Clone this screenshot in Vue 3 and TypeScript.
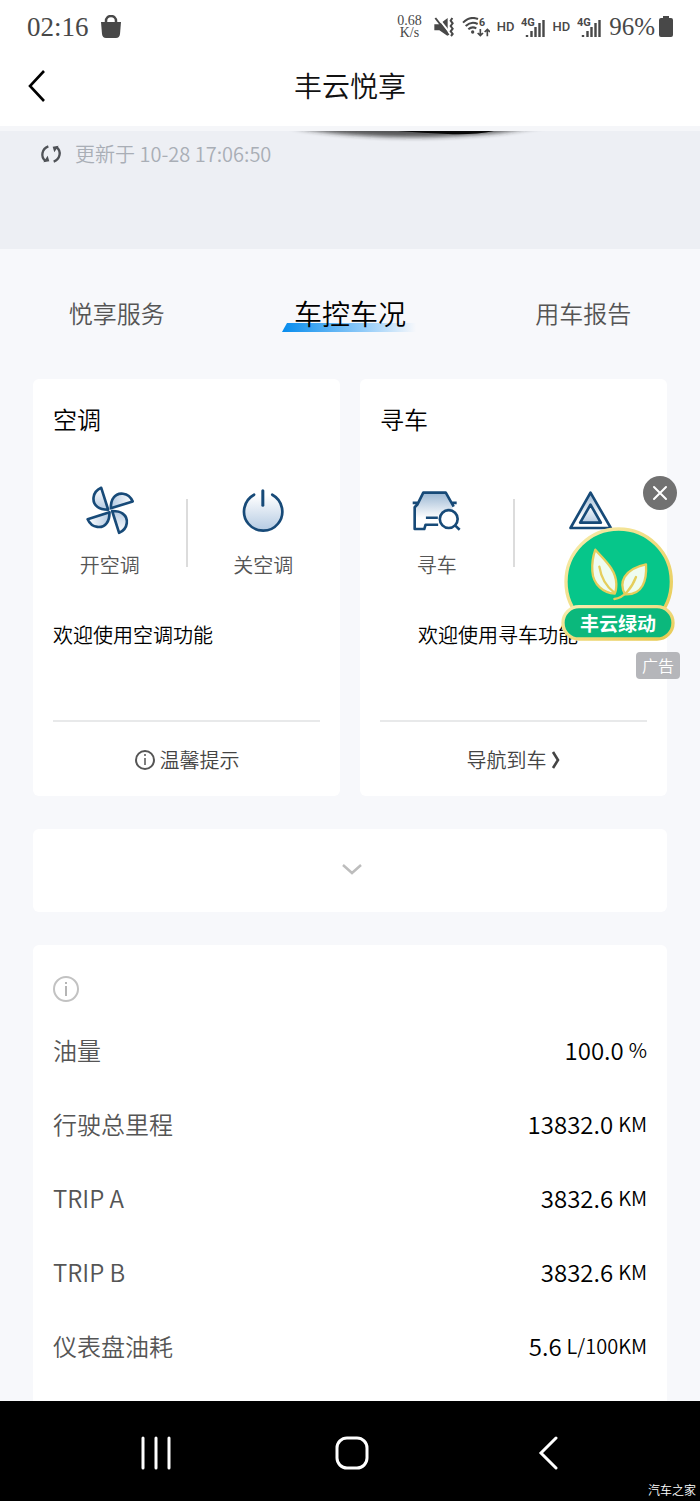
<script setup lang="ts">
import { ref } from 'vue'

interface Reading {
  label: string
  value: string
  unit: string
}

const tabs: string[] = ['悦享服务', '车控车况', '用车报告']
const activeTab = ref<number>(1)
const promoVisible = ref<boolean>(true)

const readings: Reading[] = [
  { label: '油量', value: '100.0', unit: '%' },
  { label: '行驶总里程', value: '13832.0', unit: 'KM' },
  { label: 'TRIP A', value: '3832.6', unit: 'KM' },
  { label: 'TRIP B', value: '3832.6', unit: 'KM' },
  { label: '仪表盘油耗', value: '5.6', unit: 'L/100KM' },
]
const blades: number[] = [0, 90, 180, 270]
</script>

<template>
  <div class="page">
    <div class="status">
      <span class="clock">02:16</span>
      <svg class="bag" width="22" height="24" viewBox="0 0 22 24">
        <path d="M6 9V6a5 5 0 0 1 10 0v3" fill="none" stroke="#484848" stroke-width="2.500" />
        <path d="M1 7h20l-1 12q-.5 4-4 4H6q-3.500 0-4-4z" fill="#484848" />
      </svg>
      <div class="indicators">
        <span class="speed">0.68<br />K/s</span>
        <svg width="20" height="20" viewBox="0 0 60 60">
          <path d="M1 22h15L41 3v54L16 40H1z" fill="#484848" />
          <path d="M10 0l44 56" stroke="#fff" stroke-width="6" />
          <path d="M4 3l40 51" stroke="#484848" stroke-width="6" />
          <path d="M55 3l-5 8 6 8-6 8 6 8-6 8 6 8-5 6" fill="none" stroke="#484848" stroke-width="6" />
        </svg>
        <svg width="28" height="21" viewBox="0 0 84 63">
          <g fill="none" stroke="#484848" stroke-width="6">
            <path d="M3 17Q24-4 48 6" />
            <path d="M11 27Q28 11 47 21" />
            <path d="M19 37Q30 27 43 34" />
            <path d="M55 36v20M47 48l8 8 8-8M76 58V37M68 45l8-8 8 8" stroke-width="5" />
          </g>
          <circle cx="32" cy="45" r="5" fill="#484848" />
          <text x="51" y="27" class="wifi-mark">6</text>
        </svg>
        <template v-for="n in 2" :key="n">
          <span class="hd">HD</span>
          <svg width="24" height="22" viewBox="0 0 24 22">
            <text x="0" y="10" class="net-mark">4G</text>
            <path d="M6 19v2M10.500 15v6M14.500 11v10M18.500 7v14M22.500 4v17" stroke="#484848" stroke-width="2.400" />
          </svg>
        </template>
        <span class="charge">96%</span>
        <svg width="14" height="22" viewBox="0 0 14 22">
          <path d="M4 0h6v2h2q2 0 2 2v15q0 2-2 2H2q-2 0-2-2V4q0-2 2-2h2z" fill="#484848" />
        </svg>
      </div>
    </div>

    <header class="header">
      <button class="back" type="button" aria-label="返回">
        <svg width="20" height="34" viewBox="0 0 20 34">
          <path d="M17 2L3 17l14 15" fill="none" stroke="#000" stroke-width="2.600" />
        </svg>
      </button>
      <h1>丰云悦享</h1>
    </header>

    <section class="hero">
      <svg class="car-shadow" width="320" height="24" viewBox="0 0 320 24">
        <defs>
          <filter id="soft" x="-20%" y="-100%" width="140%" height="300%"><feGaussianBlur stdDeviation="7 2" /></filter>
        </defs>
        <path d="M28-8H290L225 2Q120 12 28-2z" fill="#222" filter="url(#soft)" opacity=".75" />
        <path d="M125 0h96q-20 4-46 3-25-1-50-3z" fill="#080808" />
      </svg>
      <button class="update" type="button">
        <svg width="22" height="22" viewBox="0 0 66 66">
          <g fill="none" stroke="#4f5257" stroke-width="7">
            <path d="M25 10C6 17 0 41 17 54" />
            <path d="M41 56C60 49 66 25 49 12" />
          </g>
          <path d="M10 58l18-3-5-17zM56 8l-18 3 5 17z" fill="#4f5257" />
        </svg>
        <span>更新于 10-28 17:06:50</span>
      </button>
    </section>

    <nav class="tabs">
      <button
        v-for="(tab, i) in tabs"
        :key="tab"
        type="button"
        class="tab"
        :class="{ active: i === activeTab }"
        @click="activeTab = i"
      >
        <span>{{ tab }}</span>
      </button>
    </nav>

    <main class="content">
      <svg class="defs" width="0" height="0" aria-hidden="true">
        <defs>
          <linearGradient id="down" x1="0" y1="0" x2="0" y2="1">
            <stop offset="0" stop-color="#fff" />
            <stop offset="1" stop-color="#b4cae2" />
          </linearGradient>
          <linearGradient id="up" x1="0" y1="0" x2="0" y2="1">
            <stop offset="0" stop-color="#9bb7d3" />
            <stop offset=".7" stop-color="#fff" />
          </linearGradient>
        </defs>
      </svg>
      <div class="cards">
        <section class="card">
          <h2>空调</h2>
          <div class="actions">
            <button type="button" class="action">
              <svg width="48" height="49" viewBox="105 48 145 147">
                <path
                  v-for="deg in blades"
                  :key="deg"
                  d="M151 53C122 66 122 98 140 111Q150 119 172 119Z"
                  :transform="`rotate(${deg} 178 121)`"
                  fill="url(#down)"
                  stroke="#174a78"
                  stroke-width="8"
                  stroke-linejoin="round"
                />
              </svg>
              <span>开空调</span>
            </button>
            <button type="button" class="action">
              <svg width="43" height="45" viewBox="578 56 128 134">
                <path d="M614 76A57 57 0 1 0 668 76" fill="url(#down)" stroke="#174a78" stroke-width="8" stroke-linecap="round" />
                <path d="M640 64v43" stroke="#174a78" stroke-width="9" stroke-linecap="round" />
              </svg>
              <span>关空调</span>
            </button>
          </div>
          <p class="note">欢迎使用空调功能</p>
          <button type="button" class="foot">
            <svg width="22" height="22" viewBox="0 0 22 22">
              <circle cx="11" cy="11" r="9" fill="none" stroke="#555" stroke-width="2" />
              <path d="M11 9v7M11 5v2" stroke="#555" stroke-width="1.500" />
            </svg>
            <span class="tip">温馨提示</span>
          </button>
        </section>

        <section class="card">
          <h2>寻车</h2>
          <div class="actions">
            <button type="button" class="action">
              <svg width="49" height="41" viewBox="96 60 148 124">
                <path d="M112 104L130 68H198L218 104V140L180 165H137L133 178H104V112Z" fill="url(#up)" />
                <g fill="none" stroke="#174a78" stroke-width="8" stroke-linejoin="round">
                  <path d="M98 99H114M216 99H231M222 110L198 68H130L112 104L104 112V178H133L137 165H175M138 144H174" />
                  <circle cx="207" cy="148" r="27" fill="#fff" />
                  <path d="M226 167l14 13" />
                </g>
              </svg>
              <span>寻车</span>
            </button>
            <button type="button" class="action" aria-label="闪灯">
              <svg width="45" height="40" viewBox="566 54 134 120">
                <g fill="url(#up)" stroke="#174a78" stroke-width="8" stroke-linejoin="round">
                  <path d="M633 62L573 168H694Z" />
                  <path d="M633 98L602 152H664Z" fill="url(#down)" />
                </g>
              </svg>
            </button>
          </div>
          <p class="note inset">欢迎使用寻车功能</p>
          <button type="button" class="foot">
            <span>导航到车</span>
            <svg width="10" height="20" viewBox="0 0 10 20">
              <path d="M2 2q5 8 5 8t-5 8" fill="none" stroke="#444" stroke-width="2.600" />
            </svg>
          </button>
        </section>
      </div>

      <button type="button" class="expander" aria-label="展开">
        <svg width="20" height="12" viewBox="0 0 20 12">
          <path d="M1 2l9 8 9-8" fill="none" stroke="#bdbdbd" stroke-width="2.500" />
        </svg>
      </button>

      <section class="details">
        <svg class="info" width="26" height="26" viewBox="0 0 26 26">
          <circle cx="13" cy="13" r="12" fill="none" stroke="#c2c2c2" stroke-width="2" />
          <path d="M13 10v10M13 6v2" stroke="#b5b5b5" stroke-width="2" />
        </svg>
        <dl>
          <div v-for="r in readings" :key="r.label" class="reading">
            <dt>{{ r.label }}</dt>
            <dd>
              <span class="value">{{ r.value }}</span>
              <span class="unit">{{ r.unit }}</span>
            </dd>
          </div>
        </dl>
      </section>
    </main>

    <nav class="system">
      <button type="button" aria-label="最近任务">
        <svg width="34" height="34" viewBox="0 0 34 34">
          <path d="M4 2v30M17 2v30M30 2v30" stroke="#fff" stroke-width="3" stroke-linecap="round" />
        </svg>
      </button>
      <button type="button" aria-label="主页">
        <svg width="34" height="34" viewBox="0 0 34 34">
          <rect x="2" y="2" width="30" height="30" rx="10" fill="none" stroke="#fff" stroke-width="3" />
        </svg>
      </button>
      <button type="button" aria-label="后退">
        <svg width="20" height="34" viewBox="0 0 20 34">
          <path d="M18 2L3 17l15 15" fill="none" stroke="#fff" stroke-width="3" stroke-linecap="round" />
        </svg>
      </button>
      <span class="watermark">汽车之家</span>
    </nav>

    <aside v-if="promoVisible" class="promo">
      <button type="button" class="close" aria-label="关闭" @click="promoVisible = false">
        <svg width="16" height="16" viewBox="0 0 16 16">
          <path d="M2 2l12 12M14 2L2 14" stroke="#fff" stroke-width="2" stroke-linecap="round" />
        </svg>
      </button>
      <a href="#" class="badge">
        <svg width="114" height="114" viewBox="545 171 342 342">
          <defs>
            <linearGradient id="gold" x1="0" y1="0" x2="1" y2="1">
              <stop offset="0" stop-color="#f8edb0" />
              <stop offset="1" stop-color="#e6c94f" />
            </linearGradient>
          </defs>
          <circle cx="718" cy="335" r="158" fill="#06c68a" stroke="url(#gold)" stroke-width="10" />
          <rect x="551" y="410" width="330" height="97" rx="48" fill="#0bb87c" stroke="url(#gold)" stroke-width="10" />
          <g fill="#effcf0" stroke="#e5ce5c" stroke-width="7" stroke-linejoin="round" stroke-linecap="round">
            <path d="M648 239C670 266 710 296 711 342Q711 362 706 371C674 369 641 345 639 303C637 272 643 253 648 239Z" />
            <path d="M800 283C803 331 790 376 737 373C718 340 732 297 800 283Z" />
            <path d="M660 290Q668 340 705 368M705 387C735 384 758 352 770 321" fill="none" />
          </g>
        </svg>
        <span class="badge-text">丰云绿动</span>
      </a>
      <span class="ad">广告</span>
    </aside>
  </div>
</template>

<style>
body {
  margin: 0;
  background: #f7f8fb;
}
</style>

<style scoped>
.page {
  position: relative;
  font-family: "Noto Sans CJK SC", sans-serif;
  font-weight: 350;
  color: #111;
  background: #f7f8fb;
}
button {
  padding: 0;
  border: 0;
  background: none;
  font: inherit;
  color: inherit;
  cursor: pointer;
}
svg {
  display: block;
  flex: none;
}
h1, h2, p, dl, dd {
  margin: 0;
  font-weight: inherit;
}
.status {
  display: flex;
  align-items: center;
  height: 54px;
  padding: 0 27px;
  background: #fff;
  color: #484848;
  font-family: "Liberation Serif", serif;
}
.clock {
  font-size: 27px;
  line-height: 32px;
}
.bag {
  margin-left: 11px;
}
.indicators {
  display: flex;
  align-items: center;
  gap: 8px;
  margin-left: auto;
}
.speed {
  margin-right: 4px;
  font-size: 14px;
  line-height: 12px;
  text-align: center;
}
.hd {
  margin: 0 -1px;
  font: 500 13px/20px Roboto, sans-serif;
}
.net-mark, .wifi-mark {
  fill: #484848;
  font: 700 11px Roboto, sans-serif;
}
.wifi-mark {
  font-size: 32px;
}
.charge {
  font-size: 25px;
  line-height: 32px;
  margin-right: -4px;
}
.header {
  display: grid;
  grid-template-columns: 72px 1fr 72px;
  align-items: center;
  height: 72px;
  background: #fff;
}
.back {
  justify-self: start;
  margin-left: 27px;
  margin-bottom: 8px;
}
.header h1 {
  padding-bottom: 10px;
  text-align: center;
  font-size: 28px;
  line-height: 40px;
}
.hero {
  position: relative;
  height: 118px;
  border-top: 5px solid #f5f6f9;
  background: #edeff4;
  overflow: hidden;
}
.car-shadow {
  position: absolute;
  left: 39%;
  top: 0;
}
.update {
  position: relative;
  display: flex;
  align-items: center;
  gap: 13px;
  margin: 8px 0 0 40px;
  font-size: 20px;
  line-height: 30px;
  color: #a9aeb6;
}
.tabs {
  display: grid;
  grid-template-columns: repeat(3, 1fr);
  height: 130px;
}
.tab {
  padding-bottom: 2px;
  font-size: 24px;
  line-height: 36px;
  color: #555;
}
.tab span {
  position: relative;
  display: inline-block;
}
.tab.active {
  font-size: 28px;
  color: #000;
}
.active span {
  z-index: 0;
}
.active span::before {
  content: "";
  position: absolute;
  z-index: -1;
  left: -12px;
  right: -10px;
  bottom: -1px;
  height: 9px;
  background: linear-gradient(90deg, #078ced, #8fcaf8 60%, #f7f8fb);
  clip-path: polygon(5px 0, 100% 0, 100% 100%, 0 100%);
}
.content {
  display: flex;
  flex-direction: column;
  gap: 33px;
  padding: 0 33px;
}
.defs {
  position: absolute;
}
.cards {
  display: grid;
  grid-template-columns: 1fr 1fr;
  gap: 20px;
}
.card {
  display: flex;
  flex-direction: column;
  padding: 22px 20px 0;
  border-radius: 6px;
  background: #fff;
}
.card h2 {
  font-size: 24px;
  line-height: 36px;
  color: #000;
}
.actions {
  display: grid;
  grid-template-columns: 1fr 1fr;
  margin: 44px -20px 0;
  height: 108px;
  background: linear-gradient(#dcdcdc, #dcdcdc) center 18px / 2px 68px no-repeat;
}
.action {
  display: grid;
  grid-template-rows: 58px 52px;
  place-items: center;
  font-size: 20px;
  line-height: 28px;
  color: #555;
}
.note {
  margin: 31px 0 70px;
  font-size: 20px;
  line-height: 30px;
  color: #000;
}
.inset {
  padding-left: 38px;
}
.foot {
  display: flex;
  justify-content: center;
  align-items: center;
  gap: 4px;
  height: 76px;
  padding-top: 1px;
  border-top: 2px solid #e8e9ea;
  font-size: 20px;
  color: #444;
}
.expander {
  display: flex;
  justify-content: center;
  align-items: center;
  height: 83px;
  padding: 0 0 4px 4px;
  border-radius: 6px;
  background: #fff;
}
.details {
  padding: 31px 20px 18px;
  border-radius: 6px 6px 0 0;
  background: #fff;
}
.info {
  margin-bottom: 11px;
}
.reading {
  display: flex;
  justify-content: space-between;
  align-items: center;
  height: 74px;
  font-size: 24px;
  line-height: 36px;
}
.reading dt {
  color: #555;
}
.reading dd {
  display: flex;
  align-items: center;
  gap: 5px;
  color: #000;
}
.unit {
  font-size: 20px;
}
.system {
  position: relative;
  display: grid;
  grid-template-columns: repeat(3, 1fr);
  height: 100px;
  padding: 0 54px 0 58px;
  background: #000;
}
.system button {
  display: grid;
  place-items: center;
  padding-top: 4px;
}
.watermark {
  position: absolute;
  right: 4px;
  bottom: 2px;
  font-size: 12px;
  line-height: 18px;
  color: #fff;
}
.promo {
  position: absolute;
  top: 476px;
  right: 20px;
  display: flex;
  flex-direction: column;
  align-items: flex-end;
}
.close {
  display: grid;
  place-items: center;
  width: 34px;
  height: 34px;
  margin-right: 3px;
  border-radius: 50%;
  background: #717171;
}
.badge {
  position: relative;
  margin: 17px 5px 11px 0;
}
.badge-text {
  position: absolute;
  left: 0;
  right: 0;
  bottom: 4px;
  text-align: center;
  font-size: 19px;
  line-height: 28px;
  font-weight: 700;
  color: #fff;
}
.ad {
  width: 44px;
  border-radius: 4px;
  background: #b5b6ba;
  text-align: center;
  font-size: 16px;
  line-height: 27px;
  color: #fff;
}
</style>
